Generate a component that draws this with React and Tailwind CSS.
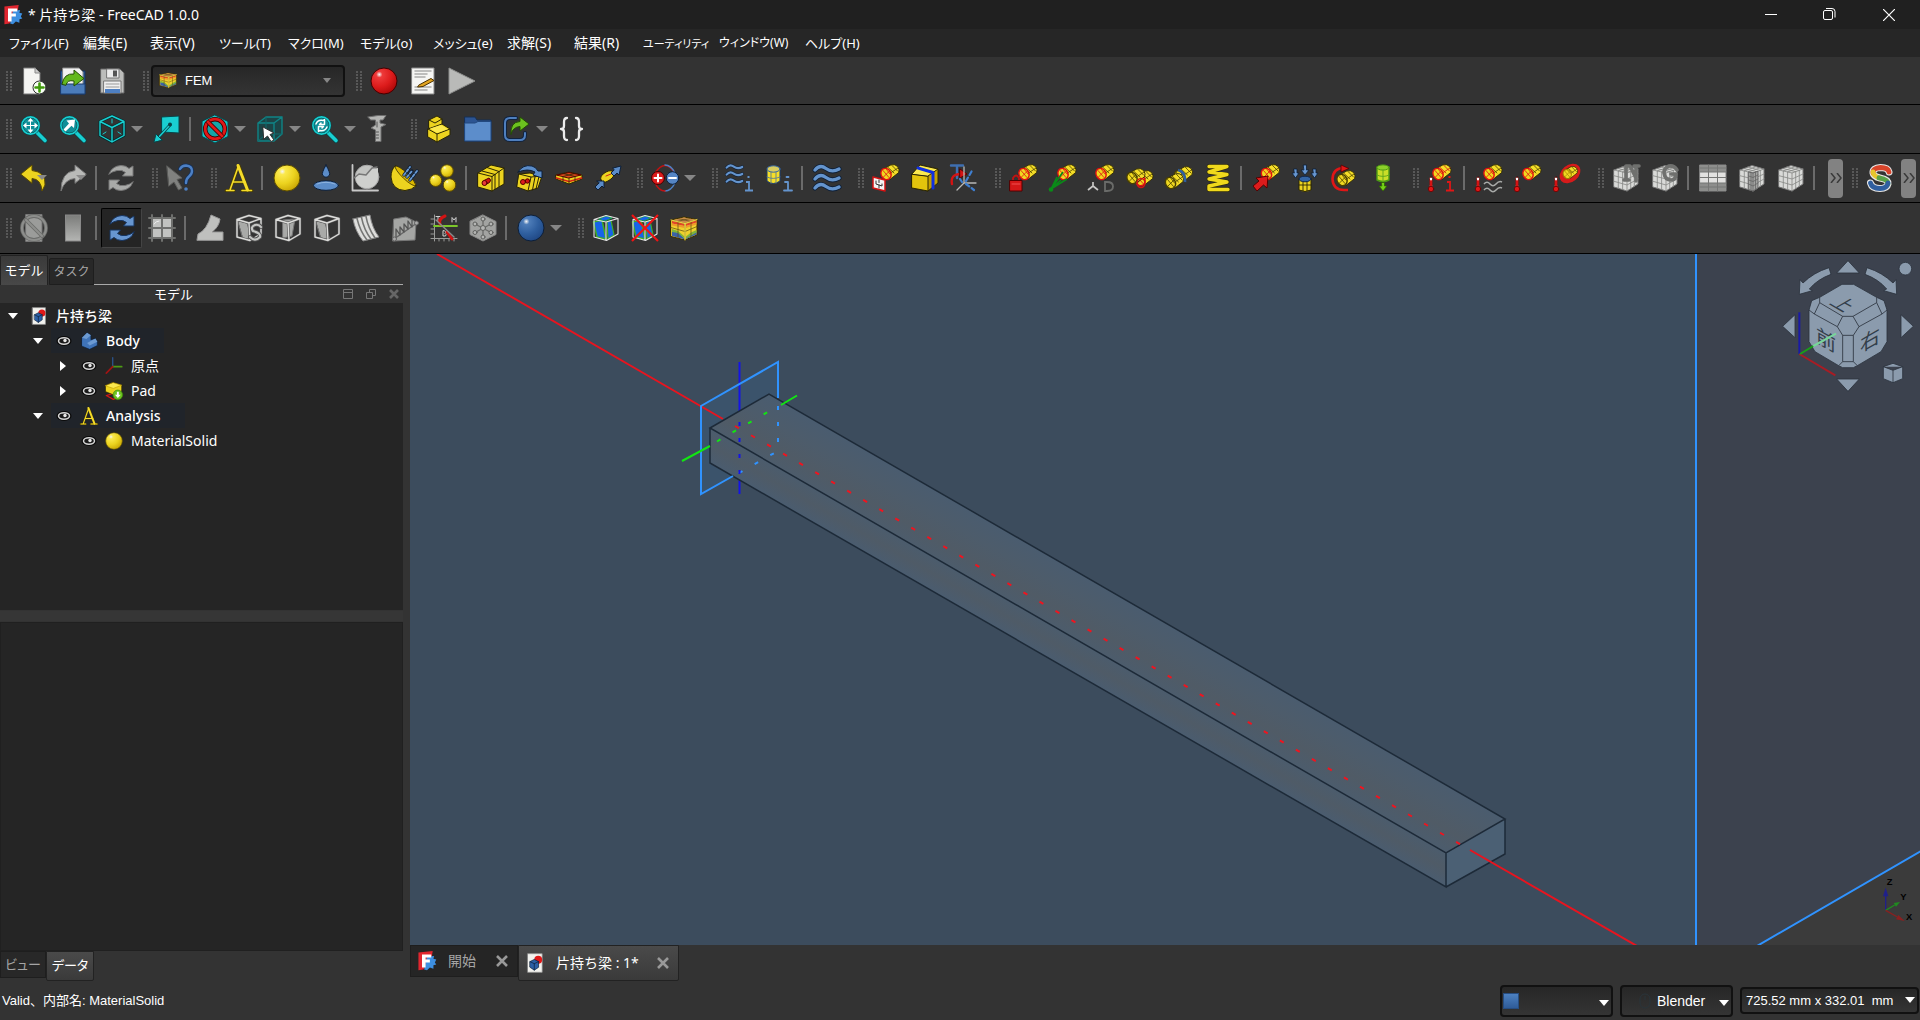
import React from "react";

const Y = "#ecd31f";
const YL = "#fbe94e";
const YD = "#c4a000";
const INK = "#2b2604";
const TEAL = "#19cfd1";
const TD = "#0a4448";
const BK = "#0d1f38";

const G = ({ children, ...p }) => <g strokeLinejoin="round" strokeLinecap="round" {...p}>{children}</g>;

/* Diagonal meshed cylinder used by the constraint icons */
const Cyl = ({ face = "#f0d820", mesh = "#4a4000", rim = "#e01212", body = "#f5de28", x = 0, y = 0 }) => (
  <G transform={`translate(${x} ${y})`}>
    <path d="M10.500 5.500 19 .8Q23-.2 25.700 2.600 28 6 26.500 8.700L18.500 15Z" fill={body} stroke={INK} strokeWidth=".9" />
    <path d="M15.500 3 22 9M20 1.500 25.500 7M18.500 9 26 4" fill="none" stroke={mesh} strokeWidth=".8" />
    <ellipse cx="14" cy="10" rx="4.900" ry="5.800" transform="rotate(-30 14 10)" fill={face} stroke={rim} strokeWidth="1.400" />
    <path d="M11 6.500 17 13.500M14.500 5.500 18 10M11 13.500 17.500 7" fill="none" stroke={rim} strokeWidth=".8" />
  </G>
);

const Thermo = ({ x = 2 }) => (
  <G transform={`translate(${x} 12)`}>
    <rect x="1.500" y="1" width="3" height="10" rx="1.500" fill="#fff" stroke="#600" strokeWidth=".8" />
    <path d="M3 5V12" stroke="#d41313" strokeWidth="2" />
    <circle cx="3" cy="13" r="2.700" fill="#e01616" stroke="#600" strokeWidth=".8" />
  </G>
);

const Lens = ({ children }) => (
  <G>
    <path d="M16.500 17 25 25.500" stroke={TD} strokeWidth="5.200" />
    <path d="M16.500 17 25 25.500" stroke={TEAL} strokeWidth="3.600" />
    <circle cx="10.500" cy="10.500" r="8.600" fill="#0f8f98" stroke={TD} strokeWidth="2.600" />
    <circle cx="10.500" cy="10.500" r="8.600" fill="none" stroke={TEAL} strokeWidth="1.600" />
    {children}
  </G>
);

const MeshCube = ({ children }) => (
  <G>
    <path d="M2 6 14 1.500 26 5V20L15 27 2 23Z" fill="#d9dad8" stroke="#777" />
    <path d="M2 6 15 9 26 5M15 9V27M6.300 7V24.300M10.600 8V25.600M18.700 7.700V24.700M22.300 6.400V22.300M2 11.700 15 15 26 10M2 17.300 15 21 26 15M6 4.500 18.700 7.700M10 3 22.300 6.400M6.300 7 18 2.700M10.600 8 22 3.800" fill="none" stroke="#858684" strokeWidth=".8" />
    {children}
  </G>
);

const WireBox = ({ fill = "#a9aaa8", line = "#dcdcda", shift = 0 }) => (
  <G>
    <path d={shift ? "M3 7 12 9 17 26 8 24Z" : "M9 6 21 5 18 22 9 24Z"} fill={fill} stroke="#777" />
    <path d="M2 5.500 14 1.500 26 4.500V20L15 26.500 2 23ZM2 5.500 14 9 26 4.500M14 9 15 26.500" fill="none" stroke="#555" strokeWidth="2.600" />
    <path d="M2 5.500 14 1.500 26 4.500V20L15 26.500 2 23ZM2 5.500 14 9 26 4.500M14 9 15 26.500" fill="none" stroke={line} strokeWidth="1.400" />
  </G>
);

const BlueBox = () => (
  <G>
    <path d="M1.500 8 10 6 14 25 5 23Z" fill="#1764e8" stroke="#3fae27" strokeWidth="1.500" />
    <path d="M15 8 19 6.500 22 21 16 25Z" fill="#1764e8" stroke="#3fae27" strokeWidth="1.200" />
    <path d="M7 5 14 2 20 4 13 7Z" fill="#1764e8" stroke="#18a34e" />
    <path d="M2 5.500 14 1.500 26 4.500V20L14.500 26.500 2 23ZM2 5.500 14 8 26 4.500M14 8V26.500" fill="none" stroke="#e6e6e6" strokeWidth="1.100" />
  </G>
);

const RainbowCube = () => (
  <G>
    <path d="M1 6 14 3 27 5.500V21L15 26 1 22.500Z" fill="#f0d02c" stroke="#3a2b00" />
    <path d="M1.500 6.500 14 3.500 26.500 6 15 9.500Z" fill="#c98a4a" />
    <path d="M2 7 14.500 9.800V12L2 9.500ZM16 9.800 26.500 6.500V8.500L16 12Z" fill="#e2442a" />
    <path d="M2 9.500 14.500 12V14L2 11.500ZM16 12 26.500 8.500V10.500L16 14Z" fill="#ee9a2c" />
    <path d="M2 17 8 18.500 14.500 24.500V25.300L2 22ZM16 24.500 21 20 26.500 18V20.500L16 25Z" fill="#3b62a8" />
    <path d="M2 15 8 17 14.500 22.500V24.500L8 19 2 18ZM16 22.500 21 18.500 26.500 16V18.500L16 24.500Z" fill="#7fb43a" />
    <path d="M15 9.500V26M1 6 15 9.500 27 5.500M8 8V24M21 7.500V23M1 13.500 15 17.500 27 12.500M8 4.500 21 7.500M7 7.500 20 4.500" fill="none" stroke="#5a4a12" strokeWidth=".7" />
    <path d="M1 6 15 9.500 27 5.500M15 9.500V26" fill="none" stroke="#fbe94e" strokeWidth=".9" />
  </G>
);

const Refresh = ({ c, d }) => (
  <G stroke={d} fill={c}>
    <path d="M2 10Q5 2 14 1.500 19 1.500 22 4.500L26 2V12H15.500L18.500 8.500Q15 5.500 10 6.500 5 7.500 2 10Z" />
    <path d="M26 18Q23 26 14 26.500 9 26.500 6 23.500L2 26V16H12.500L9.500 19.500Q13 22.500 18 21.500 23 20.500 26 18Z" />
  </G>
);

const Wave = ({ y, x = 1, w = 1 }) => (
  <G transform={`translate(${x} ${y}) scale(${w})`}>
    <path d="M1 4Q6-2 12 2.500 18 7 25 3" fill="none" stroke={BK} strokeWidth="5" />
    <path d="M1 4Q6-2 12 2.500 18 7 25 3" fill="none" stroke="#6494cd" strokeWidth="3.400" />
  </G>
);

const Ball = ({ cx = 14, cy = 14, r = 13, c = [YL, Y, YD], s = "#5c4c00", id }) => (
  <g>
    <defs>
      <radialGradient id={id} cx=".32" cy=".25" r=".85">
        <stop offset="0" stopColor="#fff" stopOpacity=".95" />
        <stop offset=".14" stopColor={c[0]} />
        <stop offset=".55" stopColor={c[1]} />
        <stop offset="1" stopColor={c[2]} />
      </radialGradient>
    </defs>
    <circle cx={cx} cy={cy} r={r} fill={`url(#${id})`} stroke={s} />
  </g>
);

const InfoI = ({ c, x = 18, y = 12 }) => (
  <path transform={`translate(${x} ${y})`} d="M3.500 1H5.500M2 6H5V14M1 14.500H9" fill="none" stroke={c} strokeWidth="1.800" />
);

const icons = {
  newDoc: <G><path d="M4 1H15L20 6V27H4Z" fill="#f4f4f2" stroke="#777" /><path d="M15 1V6H20" fill="#ccc" stroke="#888" /><circle cx="19.500" cy="20.500" r="6.500" fill="#f8fff4" stroke="#333" /><path d="M19.500 16.500V24.500M15.500 20.500H23.500" stroke="#3f9a0a" strokeWidth="2.600" /></G>,
  open: <G><path d="M2 4H26V27H2Z" fill="#2b5a9a" stroke="#173460" /><path d="M4 1H20L24 5V20H4Z" fill="#f2f2f2" stroke="#888" /><path d="M2 17H26V27H2Z" fill="#4b7cba" stroke="#1d3e70" /><path d="M3 17Q5 6 15 7V3L25 11.500 15 19V14Q8 12.500 7 18Z" fill="#63b81c" stroke="#234d05" /></G>,
  save: <G><path d="M3 2H22L26 6V26H3Z" fill="#bcbdbb" stroke="#666" /><rect x="9" y="2" width="12" height="9" fill="#ececec" stroke="#777" /><rect x="15" y="3.500" width="4" height="6" fill="#555" /><rect x="6" y="14" width="17" height="12" fill="#f0f0f0" stroke="#777" /><path d="M8 17H21M8 20H21" stroke="#999" /><rect x="7" y="22" width="15" height="4" fill="#4d7fc2" /></G>,
  record: <Ball id="rec" c={["#ee3a3a", "#dd1c1c", "#a80505"]} s="#400" />,
  macroEdit: <G><path d="M3 1H25V27H3Z" fill="#f5f5f3" stroke="#888" /><path d="M6 4H22M6 7H18M6 10H16M6 20H22M6 23H18" stroke="#aaa" strokeWidth="1.500" /><path d="M10 18 22 11.500 25 13.500 14 19.500 9 20Z" fill="#e2a420" stroke="#4a3000" /></G>,
  play: <path d="M1 1 27 14 1 27Z" fill="#b9bab8" stroke="#8d8e8c" />,
  fitAll: <Lens><path d="M10.500 3 13.500 6.500H7.500ZM10.500 18 13.500 14.500H7.500ZM3 10.500 6.500 7.500V13.500ZM18 10.500 14.500 7.500V13.500Z" fill="#fff" /><path d="M10.500 5V16M5 10.500H16" stroke="#fff" /></Lens>,
  fitSel: <Lens><path d="M7.500 5.500 16 4.500 15 13 12.500 10.700 6.500 16.500 4.500 14.500 10 8.500Z" fill="#fff" /></Lens>,
  cube: <G fill="none"><path d="M14 1 26 6.500V20.500L14 27 2 20.500V6.500ZM2 6.500 14 12.500 26 6.500M14 12.500V27" stroke="#062c2e" strokeWidth="3" /><path d="M14 1 26 6.500V20.500L14 27 2 20.500V6.500ZM2 6.500 14 12.500 26 6.500M14 12.500V27" stroke={TEAL} strokeWidth="1.400" /><path d="M14 4V8M5 19 8 17M20 17 23 19" stroke={TEAL} /></G>,
  align: <G><path d="M9 2 26 1V18L9 17Z" fill={TEAL} stroke={TD} /><path d="M17 10 5 23" stroke={TD} strokeWidth="3" /><path d="M16 11 5 23" stroke={TEAL} strokeWidth="1.500" /><circle cx="17" cy="9.500" r="2" fill={TD} /><path d="M1 27 3 19 9 25Z" fill={TEAL} stroke={TD} /></G>,
  noEntry: <G><path d="M14 0 27 6.500V21.500L14 28 1 21.500V6.500Z" fill="#14c6c9" stroke={TD} /><circle cx="14" cy="14" r="9.800" fill="#14a5a8" stroke="#3a0000" strokeWidth="4.400" /><circle cx="14" cy="14" r="9.800" fill="none" stroke="#e01818" strokeWidth="2.800" /><path d="M7.500 7.500 20.500 20.500" stroke="#3a0000" strokeWidth="4.400" /><path d="M7 7 21 21" stroke="#e01818" strokeWidth="2.800" /></G>,
  selCube: <G><path d="M2 8H18V26H2ZM2 8 10 2H26L18 8ZM18 8 26 2V19L18 26Z" fill="#1c4446" stroke="#0f8486" strokeWidth="1.400" /><path d="M10 2V19L2 26M10 19H26" fill="none" stroke="#0f6a6c" /><path d="M7 12 18 18 14 19.500 18 25 15 26.500 11.500 21 8 24Z" fill="#fff" stroke="#333" /></G>,
  syncView: <Lens><path d="M5 9Q7 4.500 12 5.500L13.500 4.500V9.500H8.500L10 8M16 12Q14 16.500 9 15.500L7.500 16.500V11.500H12.500L11 13" fill="none" stroke="#fff" strokeWidth="1.500" /></Lens>,
  caliper: <G><path d="M2 2 12 .500H20L17 5H14V8L20 9.500 15 12V26.500H9.500V15L5 13 9.500 10V5H5Z" fill="#b4b5b3" stroke="#6e6e6e" /><path d="M10 17H12.500M10 20H12.500M10 23H12.500M11 7V12" fill="none" stroke="#555" /></G>,
  part: <G stroke={INK}><path d="M4 5 12 1 17 4V13L10 16 4 13Z" fill={Y} /><path d="M4 5 10 8 17 4" fill="none" /><path d="M3 14 17 9 25 14V20L12 27 3 22Z" fill={Y} /><path d="M3 14 12 19 25 14M12 19V27" fill="none" /><path d="M5 13.500 16 10 23 14 12 18Z" fill={YL} stroke="none" /></G>,
  folder: <G><path d="M1 2H11L13 5H27V26H1Z" fill="#2c5492" stroke="#173055" /><path d="M1 8H11L14 6.500H27V26H1Z" fill="#5c8dcb" stroke="#23497f" /></G>,
  link: <G><path d="M13 3H7Q2 3 2 8V20Q2 25 7 25H17Q22 25 22 20V18" fill="none" stroke="#10233f" strokeWidth="4" /><path d="M13 3H7Q2 3 2 8V20Q2 25 7 25H17Q22 25 22 20V18" fill="none" stroke="#4f7fbe" strokeWidth="2" /><path d="M8 19Q7 7 17 6.500V2L26 9 17 16V11.500Q10 12 8 19Z" fill="#6cc21f" stroke="#234d05" /></G>,
  braces: <G fill="none" stroke="#ececec" strokeWidth="2.300"><path d="M9 3Q6 3 6 7V11Q6 14 3 14 6 14 6 17V21Q6 25 9 25M18 3Q21 3 21 7V11Q21 14 24 14 21 14 21 17V21Q21 25 18 25" /></G>,
  undo: <G><path d="M1 10 12 1V6.500Q26 8 25 21L22 27Q21 15 12 14.500V19Z" fill={Y} stroke="#5c4c00" /><path d="M17 11H27L22 16Z" fill="#8a8a8a" /></G>,
  redo: <G><path d="M27 10 16 1V6.500Q2 8 2 27 6 15 16 14.500V19Z" fill="#b9bab8" stroke="#777" /><path d="M17 11H27L22 16Z" fill="#8a8a8a" /></G>,
  refreshG: <Refresh c="#a9aaa8" d="#777" />,
  refreshB: <Refresh c="#6796d0" d="#17345f" />,
  whats: <G><path d="M1 2 16 14 11 15.500 16 24 12.500 26 8 18 3 22Z" fill="#80817f" stroke="#5d5e5c" /><path d="M14 5Q16 1.500 20 1.500 26 2 26 7 26 10 23 12.500 20 15 20 19" fill="none" stroke="#14305a" strokeWidth="4" /><path d="M14 5Q16 1.500 20 1.500 26 2 26 7 26 10 23 12.500 20 15 20 19" fill="none" stroke="#4d80c4" strokeWidth="2.400" /><circle cx="20" cy="25" r="1.800" fill="#4d80c4" /></G>,
  analysis: <G><path d="M1 26.500H9M17 26.500H27M5 26 13.500 2M14 1.500 23 26M8 18H20" fill="none" stroke="#4a3e00" strokeWidth="3" /><path d="M1.500 26.500H9M17 26.500H26.500M5 26 13.500 2M8 18H20" fill="none" stroke="#f5dc2a" strokeWidth="1.600" /><path d="M13 1.500 22.500 26" stroke="#f5dc2a" strokeWidth="3" /></G>,
  solid: <Ball id="solid" />,
  fluid: <G><ellipse cx="14" cy="21.500" rx="12.500" ry="4.800" fill="#5b8cc8" stroke={BK} /><path d="M14 1Q18.500 9 17.500 11 14 15.500 10.500 11 9.500 9 14 1Z" fill="#5b8cc8" stroke={BK} /><path d="M5 20Q14 16.500 23 20" stroke="#8fb4e0" fill="none" /></G>,
  chart: <G><circle cx="16" cy="13" r="11.800" fill="#c3c4c2" stroke="#aaa" /><path d="M5 11 9 9.500 15 10.500 20 5 27 4V12Q26 24 15 24 6 23 5 15Z" fill="#cfd0ce" /><path d="M1.500 1V26.500H27" fill="none" stroke="#c8c8c8" strokeWidth="1.800" /><path d="M3 14 8 10 15 11 21 4 26 3" fill="none" stroke="#777" strokeWidth="1.500" /></G>,
  reinforced: <G><path d="M5 2Q1 6 1 13 2 26 15 26.500 22 26 26 22Z" fill={Y} stroke={INK} /><ellipse cx="15.500" cy="12" rx="14" ry="3" transform="rotate(44 15.500 12)" fill="#dcb800" stroke={INK} strokeWidth=".7" /><path d="M14 11 20 3M17 13 22 7M20 16 27 7" stroke={BK} strokeWidth="3.400" /><path d="M14 11 20 3M17 13 22 7M20 16 27 7" stroke="#6b9bd4" strokeWidth="1.800" strokeDasharray="2.500 2" /></G>,
  balls3: <g><Ball id="b1" cx={18} cy={7} r={6.300} /><Ball id="b2" cx={6.700} cy={16.500} r={6} /><Ball id="b3" cx={20.500} cy={21} r={6.300} /></g>,
  beam: <G stroke={INK}><path d="M1 9 14 1 27 4V20L15 27 1 23Z" fill={Y} /><path d="M1 9 15 12.500 27 4M15 12.500V27M5 7 18 10.500M10 3.500 22 7.500M18 10.500V25M22 7.500V22.500" fill="none" /><path d="M7 16.500 12 14Q15 16 12.500 18.500L8 21Z" fill="#cf1414" stroke="#500" /><circle cx="7.500" cy="19" r="2.500" fill="#e83a3a" stroke="#500" /></G>,
  beamRot: <G stroke={INK}><path d="M3 10 14 9 26 12 22 24 12 27 1 23Z" fill={Y} /><path d="M3 10 15 13 12 27M15 13 26 12M19 13 16.500 26M23 12.500 20 25" fill="none" /><circle cx="7" cy="18" r="2.500" fill="#e01e1e" stroke="#500" /><circle cx="11.500" cy="17" r="2.200" fill="#cf1414" stroke="#500" /><path d="M2 8Q7 0 16 2 20 3 22 7H26V14L17 11 19 8Q12 4 2 8Z" fill="#5b8cc8" stroke={BK} /></G>,
  shell: <G><path d="M1 11 14 8 27 11V15L14 20 1 15Z" fill={Y} stroke={INK} /><path d="M2 11 14 8.500 26 11 14 14Z" fill="#e04a1c" stroke="#500" strokeWidth="1" /><path d="M1.500 14 14 17.500 26.500 14" stroke="#d62414" strokeWidth="1.800" fill="none" /><path d="M8 9.500 20 12.500M8 12.500 20 9.500M8 13.500V17M20 13.500V17M14 14V20" stroke={INK} strokeWidth=".8" fill="none" /></G>,
  fluid1d: <G><path d="M7 16Q5 12 12 8 18 5 20 9 21 13 14 17 9 20 7 16Z" fill={Y} stroke={INK} /><path d="M12 12 17 10" stroke="#c22" /><path d="M19 4 27 2 25 11 23 9 20 12 17 9 20 6Z" fill="#5b8cc8" stroke={BK} /><path d="M3 17H10V24L8 22 4 26 1 23 5 19Z" fill="#5b8cc8" stroke={BK} /></G>,
  charge: <G><path d="M4 9Q14-6 24 9" fill="none" stroke="#c01212" strokeWidth="1.500" /><path d="M14 1Q20 1 24 9M24 19Q20 27 14 27" fill="none" stroke="#4d80c4" strokeWidth="1.500" /><path d="M4 19Q8 27 14 27" fill="none" stroke="#c01212" strokeWidth="1.500" /><circle cx="7" cy="14" r="6.500" fill="#dc1c1c" stroke="#400" /><circle cx="21.500" cy="14" r="6.300" fill="#5585c4" stroke={BK} /><path d="M3.500 14H10.500M7 10.500V17.500M18 14H25" stroke="#fff" strokeWidth="2" /></G>,
  wavesI: <g><Wave y="1" x={0} w={0.65} /><Wave y="8" x={0} w={0.65} /><Wave y="15" x={0} w={0.65} /><InfoI c="#6494cd" /></g>,
  cylI: <G><path d="M2 5V17Q8 22 15 17V5Z" fill="#f5de28" stroke="#1d3e70" /><ellipse cx="8.500" cy="5" rx="6.500" ry="3.200" fill="#d8cc60" stroke="#3465a4" /><path d="M6 8V19M11 8V19M2 13Q8 16 15 13" fill="none" stroke="#5b7a90" strokeWidth=".9" /><InfoI c="#6494cd" /></G>,
  waves: <g><Wave y="2" /><Wave y="11" /><Wave y="20" /></g>,
  potential: <g><Cyl /><G><path d="M1 13 13 16V27L1 24Z" fill="#f4f4f4" stroke="#d41313" strokeWidth="1.500" /><path d="M4 17V20L10 22V20M7 18.500V16M7 21V24" fill="none" stroke="#333" /></G></g>,
  box: <G stroke={INK}><path d="M1 10 9 1 27 5V19L17 27 1 24Z" fill={YD} /><path d="M1 10 17 12V27L1 24Z" fill="#e3c40c" /><path d="M1 10 9 1 27 5 17 12Z" fill={YL} /><path d="M7 4 22 8.500V24" fill="none" stroke="#1030e0" strokeWidth="3" /></G>,
  transform: <G fill="none"><path d="M1 1.500H13M7 1.500V14" stroke="#3f6fb0" strokeWidth="2.400" /><path d="M2 20Q0 10 11 10" stroke="#d41313" strokeWidth="2.400" /><path d="M10 5 17 10 10 14Z" fill="#d41313" stroke="#500" /><path d="M14 19H26M14 19 7 26M14 19V3" stroke="#b8b8b6" strokeWidth="1.300" /><path d="M16 17 23 5M16 20 24 26M12 18 10 15" stroke="#3f7fd0" strokeWidth="2.200" strokeDasharray="4 3" /></G>,
  lock: <g><Cyl x={1} /><G><path d="M4 17V14Q7 9 10 14V17" fill="none" stroke="#c01212" strokeWidth="1.800" /><rect x="1" y="16.500" width="12" height="10.500" fill="#d41818" stroke="#500" /><path d="M3 20H11" stroke="#f05050" /></G></g>,
  rigid: <g><Cyl x={1} /><path d="M3 25 9 13M3 25 13 16M3 25 19 15M3 25 15 8" stroke="#0a8a18" strokeWidth="1.600" /><circle cx="3" cy="25.500" r="2.300" fill="#0a8a18" /></g>,
  displacement: <g><Cyl x={0} /><path d="M6 18V22L1 26M6 22 11 26" fill="none" stroke="#c8c8c6" strokeWidth="1.700" /><path d="M18 18H20Q26 18 26 22.500 26 27 20 27H18Z" fill="none" stroke="#6a6b69" strokeWidth="1.800" /></g>,
  contact: <g><Cyl x={0} y={6} /><Cyl x={-8} y={4} rim="#4a4000" /><ellipse cx="15" cy="19" rx="4" ry="4.500" fill="none" stroke="#d41313" strokeWidth="1.500" /></g>,
  tie: <g><Cyl x={0.500} y={2} rim="#4a4000" /><Cyl x={-8.500} y={9} rim="#4a4000" /><path d="M13 6Q21 8 20 18" fill="none" stroke="#2f5f9f" strokeWidth="2.600" /></g>,
  spring: <G fill="none"><path d="M5 2.500H23L5 8 23 10.500 5 15 23 18 5 22 5 25.500H24" stroke={INK} strokeWidth="4.600" /><path d="M5 2.500H23L5 8 23 10.500 5 15 23 18 5 22 5 25.500H24" stroke="#f0d91c" strokeWidth="3.400" /></G>,
  force: <g><Cyl x={0.500} /><path d="M1 22 7 17 4 14 16 12 15 24 11.500 21 5 27Z" fill="#dc1c1c" stroke="#500" /></g>,
  pressure: <G><path d="M8 15V26Q14 29 20 26V15Z" fill={Y} stroke={INK} /><path d="M8 21H20M12 17V27M16 17V27" stroke={INK} strokeWidth=".9" /><ellipse cx="14" cy="15" rx="6" ry="2.800" fill="#3465a4" stroke="#10264a" /><path d="M12.500 1H15.500V6H18L14 11 10 6H12.500ZM3 5H6V9H8L4.500 14 1 9H3ZM22 5H25V9H27L23.500 14 20 9H22Z" fill="#6796d0" stroke={BK} strokeWidth=".8" /></G>,
  centrif: <g><Cyl x={-2} y={6} rim="#4a4000" /><path d="M14 4Q3 4 2.500 15 3 26 14 26H18" fill="none" stroke="#e01616" strokeWidth="2.600" /><path d="M11 1 19 4.500 11 8Z" fill="#e01616" stroke="#500" strokeWidth=".8" /></g>,
  gravity: <G><path d="M8 3V16Q14 19 20 16V3Z" fill="#c8de28" stroke="#4c9a14" strokeWidth="1.400" /><ellipse cx="14" cy="3.500" rx="6" ry="2.600" fill="#8ccf2a" stroke="#4c9a14" /><path d="M14 6V18M8 11Q14 14 20 11" fill="none" stroke="#63a81c" /><path d="M12.500 18.500H15.500V22H18L14 27 10 22H12.500Z" fill="#73d216" stroke="#2f5f04" strokeWidth=".8" /></G>,
  tempI: <g><Cyl x={-3} mesh="#d01212" /><Thermo x={1} /><InfoI c="#e01616" x={18} /></g>,
  heatflux: <g><Cyl x={0} /><Thermo x={0} /><path d="M9 20Q12 16.500 15 20T21 20 27 18M9 26Q12 22.500 15 26T21 26 27 24" fill="none" stroke="#a8aaa8" strokeWidth="1.500" /></g>,
  temp: <g><Cyl x={0} /><Thermo x={0} /></g>,
  bodyHeat: <g><ellipse cx="17" cy="9.500" rx="11.500" ry="8.500" transform="rotate(-40 17 9.500)" fill="#e81818" opacity=".9" /><g transform="translate(3 2) scale(.8)"><Cyl x={0} rim="#a08000" /></g><Thermo x={0} /></g>,
  meshN: <MeshCube><path d="M14 2H18L24 14V2M14 16V2M12 16H17M22 2H27M24 14V17" fill="none" stroke="#6f706e" strokeWidth="3.600" /></MeshCube>,
  meshG: <MeshCube><path d="M26 6Q23 1 18 2 13 4 13 9 14 16 20 16 25 16 25 10H20" fill="none" stroke="#6f706e" strokeWidth="3.600" /></MeshCube>,
  meshTable: <G><rect x="1" y="1" width="26" height="26" fill="#e2e2e0" stroke="#888" /><path d="M1 1H27V8H1ZM1 19H27V27H1Z" fill="#8d8e8c" /><path d="M1 4H27M1 8H27M1 13.500H27M1 19H27M1 23H27M9.500 1V27M18.500 1V27" stroke="#757674" /></G>,
  meshRegion: <MeshCube><path d="M10.600 8 15 9 20 7.200V24L15 27 10.600 25.600Z" fill="#a3a4a2" stroke="#666" /><path d="M10.600 12 15 13.500 20 11M10.600 16 15 17.500 20 15M10.600 20 15 22 20 19M13 8.500V26M15 9V27M17.500 8V25" stroke="#666" fill="none" strokeWidth=".8" /></MeshCube>,
  meshGroup: <MeshCube />,
  solverS: <G fill="none"><path d="M23 8Q22 3.500 14.500 3.500 6.500 4 7 9 7.500 12.500 14 14 22.500 15.500 22 20 21 24.500 14 24.500 6 24.500 4.500 19" stroke="#e6e6e6" strokeWidth="7" /><path d="M23 8Q22 3.500 14.500 3.500 6.500 4 7 9" stroke="#d8442a" strokeWidth="4.800" /><path d="M7 8Q7.500 12.500 14 14" stroke="#e6c62c" strokeWidth="4.800" /><path d="M13 13.800Q22.500 15.500 22 20" stroke="#58a048" strokeWidth="4.800" /><path d="M22 19Q21 24.500 14 24.500 6 24.500 4.500 19" stroke="#2f5f9f" strokeWidth="4.800" /></G>,
  clipNo: <G><rect x="6" y="0.500" width="16" height="27" fill="#9b9c9a" stroke="#777" /><circle cx="14" cy="14" r="12" fill="none" stroke="#6a6b69" strokeWidth="3.800" /><circle cx="14" cy="14" r="12" fill="none" stroke="#8d8e8c" strokeWidth="2.200" /><path d="M6 6 22 22" stroke="#6a6b69" strokeWidth="3.800" /><path d="M6 6 22 22" stroke="#8d8e8c" strokeWidth="2.200" /></G>,
  clip: <g><defs><linearGradient id="clp" x1="0" y1="0" x2="0" y2="1"><stop offset="0" stopColor="#7b7c7a" /><stop offset="1" stopColor="#b4b5b3" /></linearGradient></defs><rect x="6.500" y="1" width="15" height="26" fill="url(#clp)" stroke="#8a8a8a" /></g>,
  gridIcon: <G><rect x="3" y="3" width="22" height="22" fill="#c2c3c1" /><path d="M1 4H27M1 14H27M1 24H27M4 1V27M14 1V27M24 1V27" stroke="#6f706e" strokeWidth="2" /><path d="M6 10Q8 7 11 7" fill="none" stroke="#eee" /></G>,
  warp: <G><path d="M1 26 2 20Q11 16 15 1L24 5Q23 13 16 18H27V26Z" fill="#bfc0be" stroke="#999" /></G>,
  boxS: <G><WireBox shift={1} /><path d="M26 13Q24 10 20 11 15 13 18 17 26 19 25 23 20 28 15 23" fill="none" stroke="#555" strokeWidth="4" /><path d="M26 13Q24 10 20 11 15 13 18 17 26 19 25 23 20 28 15 23" fill="none" stroke="#c6c7c5" strokeWidth="2.200" /></G>,
  boxA: <WireBox />,
  boxB: <WireBox shift={1} />,
  layers: <G><path d="M1 5 18 1Q20 14 27 23L11 27Q3 17 1 5Z" fill="#dededc" stroke="#888" /><path d="M5 4.500Q8 17 15 26M9.500 3.500Q12 16 19 25M14 2.500Q16 14 23 24" fill="none" stroke="#757674" strokeWidth="1.500" /></G>,
  stress: <G><path d="M3 5 15 3 25 8 24 26 2 27Z" fill="#a5a6a4" stroke="#777" /><path d="M3 25 26 9" stroke="#666" strokeWidth="1.500" /><path d="M5 23 5 15 9 21 9 13 13 18 13 10 17 15 17 7 21 13 21 6" fill="none" stroke="#555" strokeWidth="1.300" /><circle cx="3.500" cy="25" r="2" fill="#aaa" stroke="#666" /><circle cx="25.500" cy="9" r="2" fill="#aaa" stroke="#666" /></G>,
  plot: <G fill="none"><path d="M4.500 1V27M1 24.500H27M1 5H4M1 10H4M1 15H4M1 20H4M9 25V27M14 25V27M19 25V27M24 25V27" stroke="#9a9b99" /><path d="M6 2.500H10M8 2.500V7M22 8V3.500L24 6 26 3.500V8M13 17V22H15.500Q17 20.500 15 19.500 17 18 15 17Z" stroke="#d0d0d0" /><path d="M4 12H27" stroke="#7cc62a" strokeWidth="1.800" /><path d="M15 2Q8 5 10 10M17 18 22 25" stroke="#d41313" strokeWidth="3" /><path d="M6 6 24 23" stroke="#8a8a8a" strokeWidth="1.500" /></G>,
  hexA: <G><path d="M14 1 27 7.500V20.500L14 27 1 20.500V7.500Z" fill="#a2a3a1" stroke="#888" /><path d="M14 5V23M6 10 22 18.500M22 10 6 18.500" stroke="#6a6b69" strokeWidth="1.300" /><g fill="#b5b6b4" stroke="#5f605e"><circle cx="14" cy="14" r="2.500" /><circle cx="14" cy="5" r="2" /><circle cx="14" cy="23" r="2" /><circle cx="6" cy="10" r="2" /><circle cx="22" cy="10" r="2" /><circle cx="6" cy="18.500" r="2" /><circle cx="22" cy="18.500" r="2" /></g></G>,
  blueBall: <Ball id="blb" c={["#4d7cb8", "#2f5f9f", "#1d4480"]} s={BK} />,
  blueBox: <BlueBox />,
  blueBoxX: <g><BlueBox /><path d="M1 1 27 27M27 1 1 27" stroke="#f01414" strokeWidth="2.200" /></g>,
  rainbow: <RainbowCube />,
  doc: <G><path d="M4 1H24V27H4Z" fill="#f2f2ee" stroke="#999" /><circle cx="18.500" cy="9.500" r="5.500" fill="#e01818" /><path d="M7 12 13 9 19 12V20L13 24 7 20Z" fill="#2c5fa5" stroke={BK} /><path d="M7 12 13 15 19 12M13 15V24" fill="none" stroke={BK} /></G>,
  body: <G><path d="M3 9 11 1 17 5V12L24 10 27 15V21L15 27 3 22Z" fill="#3f73b8" stroke={BK} /><path d="M3 9 11 1 17 5 10 11ZM11 17 24 10 27 15 15 21Z" fill="#6c9ad2" /></G>,
  origin: <G fill="none"><path d="M12 15V1" stroke="#2c5590" strokeWidth="2" /><path d="M12 15H26" stroke="#4c9a14" strokeWidth="2.600" /><path d="M12 15 2 25" stroke="#a01414" strokeWidth="2.600" /></G>,
  pad: <G><path d="M2 21 12 18 24 22 13 27Z" fill="none" stroke="#d41818" strokeWidth="2" /><path d="M1 6 13 1 26 5V14L13 20 1 15Z" fill={Y} stroke={INK} /><path d="M1 6 13 10 26 5 13 1Z" fill={YL} stroke={YD} /><circle cx="20" cy="20" r="7.500" fill="#6cc21f" stroke="#3d8a08" /><path d="M18.500 15H21.500V20H24.500L20 25 15.500 20H18.500Z" fill="#fff" /></G>,
  logo: <G><path d="M2 2 22 0 21 6 9 26 2 27Z" fill="#e0262f" /><path d="M14 8 24 7 23 11 27 12 25 16 27 19 23 20 23 25 18 23 14 27 10 26Z" fill="#3d8fe0" /><path d="M7 5H20V9H12V12H18V16H12V23H7Z" fill="#fff" /></G>,
};

const Icon = ({ name, className = "size-7" }) => (
  <svg viewBox="0 0 28 28" className={`${className} shrink-0 overflow-visible`} aria-hidden="true">{icons[name]}</svg>
);

const Tool = ({ name, active }) => (
  <button
    type="button"
    aria-label={name}
    className={
      active
        ? "flex h-10 w-[41px] shrink-0 items-center justify-center rounded-xs border border-t-black border-l-black border-r-[#444] border-b-[#444] bg-[#242424]"
        : "flex h-10 w-[39px] shrink-0 items-center justify-center"
    }
  >
    <Icon name={name} />
  </button>
);

const Drop = () => (
  <button type="button" aria-label="menu" className="flex h-10 w-4 shrink-0 items-center justify-start">
    <svg viewBox="0 0 12 6" className="h-[6px] w-3" aria-hidden="true"><path d="M0 0H12L6 6Z" fill="#868686" /></svg>
  </button>
);

const Sep = () => <div className="mr-[4px] ml-[3px] h-6 w-[2px] shrink-0 bg-[#6b6b6b]" />;

const Grip = ({ w = "w-5" }) => (
  <div className={`${w} flex shrink-0 justify-end pr-[2px]`}>
    <svg viewBox="0 0 6 20" className="h-5 w-[6px]" aria-hidden="true">
      <path d="M1 0V20M5 0V20" stroke="#666" strokeWidth="1.500" strokeDasharray="2 1" />
    </svg>
  </div>
);

const More = () => (
  <button type="button" aria-label="more" className="flex h-[39px] w-[15px] shrink-0 items-center justify-center rounded-sm bg-[#828282]">
    <svg viewBox="0 0 12 10" className="h-[10px] w-3" aria-hidden="true"><path d="M1 0 5 5 1 10M7 0 11 5 7 10" fill="none" stroke="#3a3a3a" strokeWidth="1.500" /></svg>
  </button>
);

const Items = ({ list }) =>
  list.split(" ").map((t, i) => {
    if (t === "|") return <Sep key={i} />;
    if (t === "v") return <Drop key={i} />;
    if (t === ":") return <Grip key={i} />;
    if (t === ".") return <Grip key={i} w="w-[19px]" />;
    if (t === "^") return <Grip key={i} w="w-[14px]" />;
    if (t === ",") return <Grip key={i} w="w-[18px]" />;
    return <Tool key={i} name={t.replace("*", "")} active={t.endsWith("*")} />;
  });

const menus = [
  ["ファイル(F)", "w-[74px] text-[13px]"],
  ["編集(E)", "w-[67px]"],
  ["表示(V)", "w-[69px]"],
  ["ツール(T)", "w-[69px] text-[13px]"],
  ["マクロ(M)", "w-[72px] text-[13px]"],
  ["モデル(o)", "w-[73px] text-[13px]"],
  ["メッシュ(e)", "w-[74px] text-[13px]"],
  ["求解(S)", "w-[67px]"],
  ["結果(R)", "w-[69px]"],
  ["ユーティリティ", "w-[76px] text-[11px]"],
  ["ウィンドウ(W)", "w-[86px] text-xs"],
  ["ヘルプ(H)", "w-[70px] text-[13px]"],
];

const tree = [
  { pad: "pl-0", open: true, icon: "doc", text: "片持ち梁", bold: true },
  { pad: "pl-[25px]", open: true, eye: true, icon: "body", text: "Body", bold: true, hl: true },
  { pad: "pl-[50px]", open: false, eye: true, icon: "origin", text: "原点" },
  { pad: "pl-[50px]", open: false, eye: true, icon: "pad", text: "Pad" },
  { pad: "pl-[25px]", open: true, eye: true, icon: "analysis", text: "Analysis", bold: true, hl: true },
  { pad: "pl-[50px]", eye: true, icon: "solid", text: "MaterialSolid" },
];

const Eye = () => (
  <svg viewBox="0 0 16 12" className="h-3 w-4" aria-hidden="true">
    <ellipse cx="8" cy="6" rx="7.500" ry="5" fill="#0a0a0a" />
    <ellipse cx="8" cy="6" rx="5.500" ry="3.200" fill="#1a1a1a" stroke="#d4d4d4" strokeWidth="1.500" />
    <circle cx="9" cy="5.500" r="1.700" fill="#e8e8e8" />
  </svg>
);

const TreeRow = ({ pad, open, eye, icon, text, bold, hl }) => (
  <li className={`${pad} flex h-[25px] items-center`}>
    <span className="flex w-[26px] shrink-0 justify-center">
      {open !== undefined && (
        <button type="button" aria-label="toggle">
          <svg viewBox="0 0 12 12" className="size-3" aria-hidden="true"><path d={open ? "M1 3H11L6 9Z" : "M3 1 9 6 3 11Z"} fill="#fff" /></svg>
        </button>
      )}
    </span>
    <span className={`flex h-full items-center pr-6 ${hl ? "bg-[#20242a]" : ""}`}>
      {eye && <span className="flex w-[25px] justify-center"><Eye /></span>}
      <span className="flex w-[26px] justify-center"><Icon name={icon} className="size-[18px]" /></span>
      <span className={`pl-1 text-white ${bold ? "font-medium" : ""}`}>{text}</span>
    </span>
  </li>
);

const Down = ({ className }) => (
  <svg viewBox="0 0 10 6" className={`${className} pointer-events-none absolute h-[6px] w-[10px]`} aria-hidden="true"><path d="M0 0H10L5 6Z" fill="#fff" /></svg>
);

const CloseX = () => (
  <button type="button" aria-label="閉じる">
    <svg viewBox="0 0 12 12" className="size-3" aria-hidden="true"><path d="M1 1 11 11M11 1 1 11" stroke="#999" strokeWidth="2.600" /></svg>
  </button>
);

const combo = "w-full appearance-none rounded-sm border-2 border-[#111] bg-linear-to-b from-[#272727] to-[#343434] text-white outline-none";

const Scene = () => (
  <svg viewBox="410 254 1510 691" preserveAspectRatio="xMidYMid slice" className="absolute inset-0 size-full" aria-hidden="true">
    <defs>
      <linearGradient id="beamTop" x1="1090" y1="647" x2="1119" y2="596" gradientUnits="userSpaceOnUse">
        <stop offset="0" stopColor="#4c5c6c" />
        <stop offset=".3" stopColor="#505b66" />
        <stop offset=".65" stopColor="#4d5c6b" />
        <stop offset="1" stopColor="#4a5c6f" />
      </linearGradient>
      <linearGradient id="beamSide" x1="1090" y1="647" x2="1075" y2="673" gradientUnits="userSpaceOnUse">
        <stop offset="0" stopColor="#4b5c6d" />
        <stop offset=".5" stopColor="#4f5b67" />
        <stop offset="1" stopColor="#4a5c6f" />
      </linearGradient>
    </defs>
    <rect x="410" y="254" width="1510" height="691" fill="#3b3b3b" />
    <path d="M1696 254H1920V851L1757 945H1696Z" fill="#3c424e" />
    <rect x="410" y="254" width="1286" height="691" fill="#3c4c5d" />
    <path d="M1696 254V945M1757 946 1921 851" stroke="#3093ff" strokeWidth="2" fill="none" />
    <path d="M701 406 778 362V450L701 494Z" fill="#3b536b" />
    <path d="M437 254 723 419" stroke="#e8141f" strokeWidth="2" />
    <path d="M739.500 362V411M739.500 480V494" stroke="#1414e6" strokeWidth="2" />
    <path d="M710 428 769 394 1505 819 1446 853Z" fill="url(#beamTop)" />
    <path d="M710 428 1446 853V887L710 463Z" fill="url(#beamSide)" />
    <path d="M1446 853 1505 819V854L1446 887Z" fill="#4b6074" />
    <g fill="none" stroke="#1d2a38" strokeWidth="1.500">
      <path d="M710 428 769 394 1505 819 1446 853ZM710 428V463L1446 887V853M1446 887 1505 854V819" />
    </g>
    <g fill="none" stroke="#3093ff" strokeWidth="2">
      <path d="M778 398V362L701 406V494L733 476" />
      <path d="M778 406V446" strokeDasharray="4 12" />
      <path d="M739 473 776 452" strokeDasharray="4 14" />
    </g>
    <path d="M739.500 422V478" stroke="#1414e6" strokeWidth="2" strokeDasharray="4 12" />
    <path d="M682 461 710 446M781 405 797 395.500" stroke="#12e612" strokeWidth="2" />
    <path d="M717 441.500 771 410" stroke="#12e612" strokeWidth="2" strokeDasharray="4 14" />
    <path d="M735 426 1470 850" stroke="#f0141f" strokeWidth="2" strokeDasharray="4.500 14" />
    <path d="M1470 850 1637 946" stroke="#e8141f" strokeWidth="2" />
  </svg>
);

const NaviCube = () => (
  <svg viewBox="0 12 480 438" className="absolute top-0 right-0 h-[146px] w-[160px]" aria-hidden="true">
    <g fill="#8b9bad" stroke="#2b333d" strokeWidth="2.500" strokeLinejoin="round">
      <path d="M264 32 298 69H230ZM264 424 298 387H230ZM68 229 105 194V263ZM460 229 423 194V263Z" />
      <path d="M207 53 213 73Q172 88 148 117L157 122 118 133 120 89 129 99Q160 68 207 53ZM321 53 315 73Q356 88 380 117L371 122 410 133 408 89 399 99Q368 68 321 53Z" />
      <circle cx="436" cy="56" r="19" />
      <path d="M370 350 399 340 428 350V386L399 398 370 386ZM370 350 399 361 428 350M399 361V398" />
      <path d="M246 103H281L350 142 372 152 381 180V275L363 305 292 347 280 353H248L236 347 165 305 147 275V180L155 152 179 142Z" />
      <path d="M179 142V158L248 199H279L350 158V142M179 158 163 192 147 180M350 158 366 192 381 180M163 192 232 230 248 256V335L236 347M366 192 297 230 280 256V335L292 347M248 199 232 230M279 199 297 230M248 256H280M248 335H280" fill="none" />
    </g>
    <g fill="#333e4a" fontSize="60" textAnchor="middle" className="font-[Noto_Sans_CJK_JP,sans-serif]">
      <text transform="translate(230 174) rotate(30) skewX(-30)" fontSize="54">上</text>
      <text transform="translate(198 292) skewY(30)">前</text>
      <text transform="translate(330 292) skewY(-30)">右</text>
    </g>
    <path d="M118 312V187" stroke="#1a1aa6" strokeWidth="6" />
    <path d="M118 312 226 376" stroke="#a81c24" strokeWidth="6" />
    <path d="M120 312 160 288" stroke="#18a018" strokeWidth="6" />
    <path d="M160 288 228 251" stroke="#78d69a" strokeWidth="6" />
  </svg>
);

const AxisCross = () => (
  <svg viewBox="1239 40 141 165" className="absolute right-0 bottom-[17px] h-[55px] w-[47px]" aria-hidden="true">
    <path d="M1277 152V105" stroke="#20208a" strokeWidth="4" />
    <path d="M1277 84 1285 110H1269Z" fill="#20208a" />
    <path d="M1277 152 1304 136" stroke="#208a20" strokeWidth="4" />
    <path d="M1320 127 1308 141 1301 130Z" fill="#208a20" />
    <path d="M1277 152 1312 172" stroke="#8a2020" strokeWidth="4" />
    <path d="M1334 184 1308 179 1315 166Z" fill="#8a2020" />
    <g fill="#000" fontSize="28" fontWeight="bold" className="font-[Liberation_Sans,sans-serif]">
      <text x="1280" y="77">Z</text>
      <text x="1321" y="122">Y</text>
      <text x="1338" y="182">X</text>
    </g>
  </svg>
);

export default function App() {
  return (
    <div className="flex h-screen w-full flex-col overflow-hidden bg-[#333] font-[Noto_Sans,Noto_Sans_CJK_JP,sans-serif] text-sm leading-none text-white">
      <header className="flex h-[29px] shrink-0 items-center bg-[#202020] pl-[3px]">
        <Icon name="logo" className="size-5" />
        <h1 className="pl-[5px]">* 片持ち梁 - FreeCAD 1.0.0</h1>
        <div className="ml-auto flex">
          <button type="button" aria-label="最小化" className="flex h-7 w-[58px] items-center justify-center">
            <svg viewBox="0 0 12 12" className="size-3"><path d="M0 5.500H12" stroke="#fff" /></svg>
          </button>
          <button type="button" aria-label="元に戻す" className="flex h-7 w-[58px] items-center justify-center">
            <svg viewBox="0 0 13 13" className="size-[13px]" fill="none" stroke="#fff"><rect x=".5" y="2.500" width="9" height="9" rx="1.500" /><path d="M3 .500H9Q12 .500 12 3.500V9.500" /></svg>
          </button>
          <button type="button" aria-label="閉じる" className="flex h-7 w-[62px] items-center justify-center">
            <svg viewBox="0 0 12 12" className="size-3"><path d="M0 0 12 12M12 0 0 12" stroke="#fff" strokeWidth="1.200" /></svg>
          </button>
        </div>
      </header>

      <nav className="flex h-7 shrink-0 items-center bg-[#262626] pl-[9px] [font-feature-settings:'palt']">
        {menus.map(([label, w]) => (
          <button key={label} type="button" className={`${w} h-full shrink-0 text-left whitespace-nowrap`}>{label}</button>
        ))}
      </nav>

      <div className="flex h-12 shrink-0 items-center border-b border-black">
        <Items list="^ newDoc open save :" />
        <div className="relative w-[194px] shrink-0 font-[Liberation_Sans,sans-serif] text-[13px]">
          <span className="pointer-events-none absolute top-[6px] left-2"><Icon name="rainbow" className="size-[18px]" /></span>
          <select aria-label="ワークベンチ" className={`${combo} h-8 pl-8`}><option>FEM</option></select>
          <svg viewBox="0 0 8 5" className="pointer-events-none absolute top-[13px] right-[14px] h-[5px] w-2" aria-hidden="true"><path d="M0 0H8L4 5Z" fill="#868686" /></svg>
        </div>
        <Items list=". record macroEdit play" />
      </div>
      <div className="flex h-[49px] shrink-0 items-center border-b border-black">
        <Items list="^ fitAll fitSel cube v align | noEntry v selCube v syncView v caliper : part folder link v braces" />
      </div>
      <div className="flex h-[49px] shrink-0 items-center border-b border-black">
        <Items list="^ undo redo | refreshG : whats : analysis | solid fluid chart reinforced balls3 | beam beamRot shell fluid1d , charge v : wavesI cylI | waves : potential box transform : lock rigid displacement contact tie spring | force pressure centrif gravity . tempI | heatflux temp bodyHeat : meshN meshG | meshTable meshRegion meshGroup |" />
        <div className="ml-auto flex shrink-0 items-center pr-1">
          <More />
          <Grip w="w-[17px]" />
          <Tool name="solverS" />
          <span className="pl-[2px]"><More /></span>
        </div>
      </div>
      <div className="flex h-[51px] shrink-0 items-center border-b border-black">
        <Items list="^ clipNo clip | refreshB* gridIcon | warp boxS boxA boxB layers stress plot hexA | blueBall v : blueBox blueBoxX rainbow" />
      </div>

      <main className="flex min-h-0 flex-1">
        <aside className="mr-[7px] flex w-[403px] shrink-0 flex-col">
          <div className="flex h-[31px] shrink-0 items-end">
            <button type="button" className="h-[30px] w-12 rounded-t-xs border border-b-0 border-[#222] bg-linear-to-b from-[#3a3a3a] to-[#484848] pb-px text-[13px]">モデル</button>
            <button type="button" className="ml-px h-[27px] w-[45px] rounded-t-xs border border-[#1e1e1e] bg-[#282828] text-xs text-[#a5a5a5]">タスク</button>
            <div className="h-px flex-1 bg-[#aaa]" />
          </div>
          <div className="flex h-[18px] shrink-0 items-center pr-1">
            <h2 className="flex-1 pl-1 text-center text-[13px]">モデル</h2>
            <div className="flex w-14 items-center justify-between">
              <button type="button" aria-label="折りたたむ"><svg viewBox="0 0 10 10" className="size-[10px]" fill="none" stroke="#777"><path d="M.5.5H9.500V9.500H.5ZM.5 3.500H9.500" /></svg></button>
              <button type="button" aria-label="切り離す"><svg viewBox="0 0 10 10" className="size-[10px]" fill="none" stroke="#777"><path d="M.5 3.500H6.500V9.500H.5ZM3.500 3V.5H9.500V6.500H7" /></svg></button>
              <button type="button" aria-label="閉じる"><svg viewBox="0 0 10 10" className="size-[10px]"><path d="M1 1 9 9M9 1 1 9" stroke="#666" strokeWidth="2.600" /></svg></button>
            </div>
          </div>
          <ul className="min-h-0 flex-[16] bg-[#252525]">
            {tree.map((r) => <TreeRow key={r.text} {...r} />)}
          </ul>
          <div className="my-px h-[10px] shrink-0 bg-[#363636]" />
          <section className="min-h-0 flex-[17] border border-[#202020] bg-[#252525]" />
          <div className="flex h-[30px] shrink-0 items-start text-[13px]">
            <button type="button" className="h-[27px] w-[46px] border border-[#1e1e1e] bg-[#282828] text-[#a5a5a5] [font-feature-settings:'palt']">ビュー</button>
            <button type="button" className="h-[30px] w-12 rounded-b-xs border border-[#222] bg-linear-to-b from-[#4a4a4a] to-[#3a3a3a] pb-px [font-feature-settings:'palt']">データ</button>
          </div>
        </aside>

        <div className="flex min-w-0 flex-1 flex-col">
          <div className="relative min-h-0 flex-1 overflow-hidden">
            <Scene />
            <NaviCube />
            <AxisCross />
          </div>
          <div className="flex h-9 shrink-0 items-start">
            <div className="flex h-8 w-[108px] items-center border border-[#1e1e1e] bg-[#252525] pr-[9px] pl-[6px]">
              <Icon name="logo" className="size-5" />
              <button type="button" className="flex-1 pl-[11px] text-left text-[#a5a5a5]">開始</button>
              <CloseX />
            </div>
            <div className="flex h-9 w-[161px] items-center rounded-b-xs border border-[#222] bg-linear-to-b from-[#4a4a4a] to-[#3a3a3a] pr-[9px] pl-[6px]">
              <Icon name="doc" className="size-5" />
              <button type="button" className="flex-1 pl-[11px] text-left whitespace-nowrap">片持ち梁 : 1*</button>
              <CloseX />
            </div>
          </div>
        </div>
      </main>

      <footer className="flex h-[39px] shrink-0 items-center pl-[2px] font-[Liberation_Sans,Noto_Sans_CJK_JP,sans-serif]">
        <p className="text-[13px]">Valid、内部名: MaterialSolid</p>
        <div className="ml-auto flex items-center gap-[7px] pr-px">
          <div className="relative w-[113px]">
            <span className="pointer-events-none absolute top-2 left-[3px] size-4 border border-[#274d80] bg-linear-to-b from-[#4c80c0] to-[#2f5c98]" />
            <select aria-label="通知" className={`${combo} h-8 pl-6`}><option></option></select>
            <Down className="top-[15px] right-1" />
          </div>
          <div className="relative w-[113px]">
            <svg viewBox="0 0 12 16" className="pointer-events-none absolute top-2 left-[19px] h-4 w-3" aria-hidden="true"><rect x="1" y="1" width="10" height="14" rx="5" fill="none" stroke="#29343a" /><path d="M6 3V7" stroke="#29343a" /></svg>
            <select aria-label="ナビゲーション" className={`${combo} h-8 pl-[35px]`}><option>Blender</option></select>
            <Down className="top-[15px] right-1" />
          </div>
          <div className="relative w-[179px] text-[13px]">
            <select aria-label="表示サイズ" className={`${combo} h-[27px] pl-1`}><option>725.52 mm x 332.01 {"\u00a0"}mm</option></select>
            <Down className="top-[10px] right-1" />
          </div>
        </div>
      </footer>
    </div>
  );
}
